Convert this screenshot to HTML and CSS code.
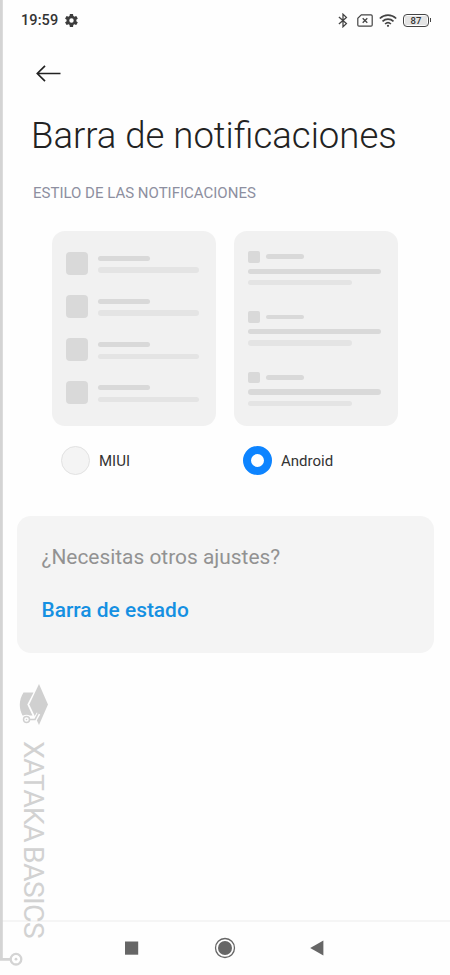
FILE: index.html
```html
<!DOCTYPE html>
<html lang="es">
<head>
<meta charset="utf-8">
<title>Barra de notificaciones</title>
<link rel="stylesheet" href="styles.css">
</head>
<body>
<div class="screen">
  <header class="status">
    <span class="clock">19:59</span>
    <svg class="gear" viewBox="2 2 20 20" width="13" height="13"><path fill="#3c3c3c" fill-rule="evenodd" d="M19.4 13a7.500 7.500 0 0 0 0-2l2.100-1.600a.5.500 0 0 0 .1-.6l-2-3.500a.5.500 0 0 0-.6-.2l-2.500 1a7.300 7.300 0 0 0-1.700-1l-.4-2.700a.5.500 0 0 0-.5-.4h-4a.5.500 0 0 0-.5.400L9 5.100a7.700 7.700 0 0 0-1.700 1l-2.500-1a.5.500 0 0 0-.6.200l-2 3.500a.5.500 0 0 0 .1.600L4.500 11a8 8 0 0 0 0 2l-2.200 1.600a.5.500 0 0 0-.1.600l2 3.500c.1.200.4.300.6.200l2.500-1a7.300 7.300 0 0 0 1.700 1l.4 2.700c0 .2.200.4.500.4h4c.2 0 .5-.2.500-.4l.4-2.700a7.700 7.700 0 0 0 1.700-1l2.500 1c.2.100.5 0 .6-.2l2-3.500a.5.500 0 0 0-.1-.6zM12 15.400a3.400 3.400 0 1 1 0-6.800 3.400 3.400 0 0 1 0 6.800z"/></svg>
    <div class="indicators">
      <svg width="10" height="15" viewBox="0 0 10 15" fill="none" stroke="#444" stroke-width="1.300"><path d="M.9 4 8.400 10.600 5 13.800V1.200L8.400 4.400.9 11"/></svg>
      <svg width="16" height="13" viewBox="0 0 16 13" fill="none" stroke="#444" stroke-width="1.200"><path d="M4.300.8H14a1.200 1.200 0 0 1 1.200 1.200v9a1.200 1.200 0 0 1-1.200 1.200H2A1.200 1.200 0 0 1 .8 11V4.300z"/><path d="m5.700 4.200 4.600 4.600m0-4.600L5.700 8.800" stroke-width="1.300"/></svg>
      <svg width="18" height="13" viewBox="0 0 18 13" fill="none" stroke="#444" stroke-width="1.700"><path d="M.8 4.500c4.700-4.400 11.700-4.400 16.400 0M3.500 7.400c3.200-3 7.800-3 11 0M6.100 10c1.700-1.600 4.100-1.600 5.800 0"/><circle cx="9" cy="11.800" r="1.100" fill="#444" stroke="none"/></svg>
      <span class="battery"><span class="cell">87</span></span>
    </div>
  </header>
  <svg class="back" width="26" height="18" viewBox="0 0 26 18" fill="none" stroke="#222" stroke-width="1.700"><path d="M24.500 9.500H1.500M9 1.800 1.300 9.500 9 17.200"/></svg>
  <h1 class="title">Barra de notificaciones</h1>
  <h2 class="section">ESTILO DE LAS NOTIFICACIONES</h2>

  <main class="styles">
    <div class="choice">
      <div class="preview miui">
        <div class="item"><i class="thumb"></i><div class="lines"><b></b><i></i></div></div>
        <div class="item"><i class="thumb"></i><div class="lines"><b></b><i></i></div></div>
        <div class="item"><i class="thumb"></i><div class="lines"><b></b><i></i></div></div>
        <div class="item"><i class="thumb"></i><div class="lines"><b></b><i></i></div></div>
      </div>
      <label class="option"><span class="radio"></span><span class="name">MIUI</span></label>
    </div>
    <div class="choice">
      <div class="preview android">
        <div class="note"><div class="head"><i></i><b></b></div><div class="long"></div><div class="short"></div></div>
        <div class="note"><div class="head"><i></i><b></b></div><div class="long"></div><div class="short"></div></div>
        <div class="note"><div class="head"><i></i><b></b></div><div class="long"></div><div class="short"></div></div>
      </div>
      <label class="option"><span class="radio checked"></span><span class="name">Android</span></label>
    </div>
  </main>

  <section class="more">
    <p class="question">¿Necesitas otros ajustes?</p>
    <a class="link">Barra de estado</a>
  </section>

  <nav class="navbar">
    <svg width="14" height="14"><path fill="#666" d="M0 .500h13.200v13.200H0z"/></svg>
    <svg width="22" height="22" viewBox="0 0 22 22"><circle cx="11" cy="11" r="9.500" fill="none" stroke="#666" stroke-width="1.300"/><circle cx="11" cy="11" r="7" fill="#666"/></svg>
    <svg width="14" height="16" viewBox="0 0 14 16"><path fill="#666" d="M.2 8 13.400.4v15.200z"/></svg>
  </nav>

  <div class="brand">
    <svg width="30" height="42" viewBox="0 0 30 42"><path fill="#d0d0d0" d="M4.500 8.500H14.500L8.300 20.500 13.500 31.500H3.500C-.5 24 0 15.500 4.500 8.500z"/><path fill="#d0d0d0" d="M20 0 29 20.500 20 41 10.300 20.500z"/><path fill="none" stroke="#fefefe" stroke-width="4" d="M8 35.500h8l3.500-6"/><circle cx="7.500" cy="35.500" r="4.800" fill="#fefefe"/><path fill="none" stroke="#d0d0d0" stroke-width="1.600" d="M10.500 35.500H16l3.300-6.500"/><circle cx="7.500" cy="35.500" r="3" fill="#fefefe" stroke="#d0d0d0" stroke-width="1.500"/><circle cx="7.500" cy="35.500" r=".8" fill="#d0d0d0"/></svg>
    <span class="wordmark">XATAKA BASICS</span>
  </div>
  <svg class="rail" width="24" height="975" viewBox="0 0 24 975"><path fill="#d4d4d4" d="M0 0h2.800v958H11v2.800H0z"/><circle cx="16" cy="959.200" r="5.300" fill="#fff" stroke="#d4d4d4" stroke-width="2.300"/><circle cx="16" cy="959.200" r="1.400" fill="#d4d4d4"/></svg>
</div>
</body>
</html>
```

FILE: styles.css
```css
* { box-sizing: border-box; }
body { margin: 0; background: #fff; font-family: Roboto, sans-serif; }
.screen { position: relative; width: 450px; height: 975px; overflow: hidden; background: #fefefe; display: flex; flex-direction: column; }

.status { height: 40px; padding: 0 18px 0 21px; display: flex; align-items: center; flex: none; }
.clock { font-size: 14.500px; font-weight: 500; color: #333; letter-spacing: .1px; line-height: 20px; padding-top: 1px; }
.gear { margin-left: 7px; }
.indicators { margin-left: auto; display: flex; align-items: center; }
.indicators svg:nth-child(1) { margin-right: 9px; }
.indicators svg:nth-child(2) { margin-right: 6px; }
.indicators svg:nth-child(3) { margin-right: 6px; }
.battery { position: relative; display: flex; width: 26px; height: 13px; margin-right: 3px; padding: 1px; border: 1.500px solid #444; border-radius: 4px; }
.battery::after { content: ""; position: absolute; right: -3px; top: 3px; width: 1.500px; height: 4px; background: #444; }
.cell { flex: 1; background: #e4e4e4; font-size: 9.500px; font-weight: 500; line-height: 9px; text-align: center; color: #333; }

.back { margin: 24px 0 0 36px; flex: none; }
.title { margin: 29px 0 0 31px; font-size: 36.500px; font-weight: 300; line-height: 50px; color: #222; white-space: nowrap; }
.section { margin: 22px 0 0 33px; font-size: 15px; font-weight: 400; line-height: 20px; color: #8d8fa0; white-space: nowrap; }

.styles { display: flex; gap: 18px; margin: 28px 0 0 52px; }
.choice { width: 164px; }
.preview { height: 195px; border-radius: 13px; background: #f1f1f1; }
.miui { padding: 21px 0 0 13.500px; display: flex; flex-direction: column; gap: 20.500px; }
.item { display: flex; gap: 9.500px; height: 22.600px; }
.thumb { width: 22.600px; border-radius: 4px; background: #d9d9d9; }
.lines { padding-top: 4px; }
.lines b, .lines i { display: block; height: 5.200px; border-radius: 3px; }
.lines b { width: 52.500px; background: #d9d9d9; }
.lines i { width: 101px; margin-top: 6.200px; background: #e4e4e4; }
.android { padding: 20px 0 0 14px; display: flex; flex-direction: column; gap: 25.800px; }
.note { height: 34.500px; }
.head { display: flex; align-items: center; gap: 6px; height: 11.500px; }
.head i { width: 11.500px; height: 11.500px; border-radius: 2px; background: #d9d9d9; }
.head b { width: 38.500px; height: 4.800px; border-radius: 3px; background: #d9d9d9; }
.long { width: 133px; height: 5.500px; margin-top: 6px; border-radius: 3px; background: #d9d9d9; }
.short { width: 103.500px; height: 5.200px; margin-top: 6.200px; border-radius: 3px; background: #e4e4e4; }
.option { display: flex; align-items: center; gap: 9px; height: 29px; margin: 20px 0 0 9px; }
.radio { width: 29px; height: 29px; border-radius: 50%; background: #f4f4f4; border: 1px solid #e2e2e2; }
.checked { border: 8px solid #0d84ff; background: #fff; }
.name { font-size: 15px; line-height: 20px; color: #333; padding-top: 1px; }

.more { margin: 41px 16.500px 0 16.500px; height: 137px; padding: 27px 25px; border-radius: 14px; background: #f4f4f4; }
.question { margin: 0; font-size: 20.900px; line-height: 28px; color: #929292; white-space: nowrap; }
.link { display: block; margin-top: 25px; font-size: 20.900px; font-weight: 500; line-height: 28px; color: #1590e2; }

.navbar { margin-top: auto; height: 55px; border-top: 2px solid #f5f5f5; padding: 0 126px 2px 125px; display: flex; align-items: center; justify-content: space-between; }

.brand { position: absolute; left: 19px; top: 684px; width: 30px; display: flex; flex-direction: column; align-items: center; gap: 15px; }
.wordmark { writing-mode: vertical-rl; font-size: 28.500px; letter-spacing: -.8px; word-spacing: -2px; line-height: 30px; margin-right: 2px; color: #d2d2d2; white-space: nowrap; }
.rail { position: absolute; left: 0; top: 0; }
```
